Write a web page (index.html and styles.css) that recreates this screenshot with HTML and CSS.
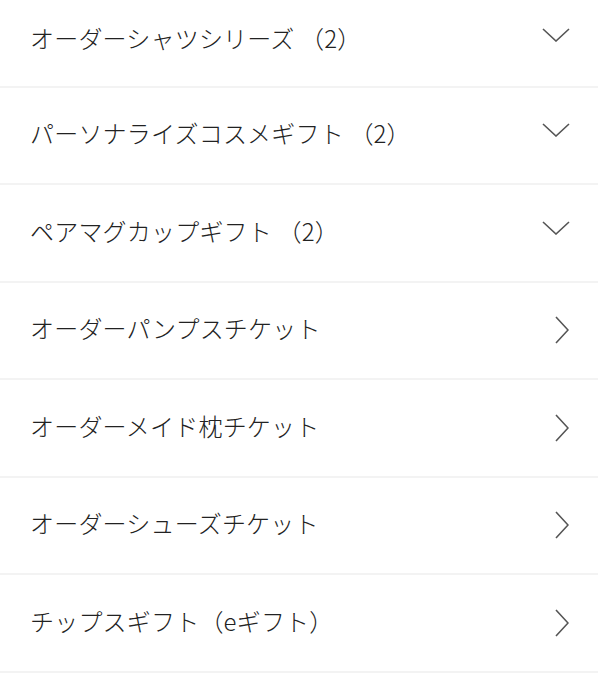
FILE: index.html
```html
<!DOCTYPE html>
<html lang="ja">
<head>
<meta charset="utf-8">
<link rel="stylesheet" href="styles.css">
</head>
<body>
<ul class="menu">
  <li class="row">
    <span class="label">オーダーシャツシリーズ （2）</span>
    <span class="icon"><svg class="down" viewBox="0 0 28 14"><path d="M1 1 L14 13 L27 1"/></svg></span>
  </li>
  <li class="row">
    <span class="label">パーソナライズコスメギフト （2）</span>
    <span class="icon"><svg class="down" viewBox="0 0 28 14"><path d="M1 1 L14 13 L27 1"/></svg></span>
  </li>
  <li class="row">
    <span class="label">ペアマグカップギフト （2）</span>
    <span class="icon"><svg class="down" viewBox="0 0 28 14"><path d="M1 1 L14 13 L27 1"/></svg></span>
  </li>
  <li class="row">
    <span class="label">オーダーパンプスチケット</span>
    <span class="icon"><svg class="right" viewBox="0 0 14 28"><path d="M1 1 L13 14 L1 27"/></svg></span>
  </li>
  <li class="row">
    <span class="label">オーダーメイド枕チケット</span>
    <span class="icon"><svg class="right" viewBox="0 0 14 28"><path d="M1 1 L13 14 L1 27"/></svg></span>
  </li>
  <li class="row">
    <span class="label">オーダーシューズチケット</span>
    <span class="icon"><svg class="right" viewBox="0 0 14 28"><path d="M1 1 L13 14 L1 27"/></svg></span>
  </li>
  <li class="row">
    <span class="label">チップスギフト（eギフト）</span>
    <span class="icon"><svg class="right" viewBox="0 0 14 28"><path d="M1 1 L13 14 L1 27"/></svg></span>
  </li>
</ul>
</body>
</html>
```
FILE: styles.css
```css
html, body {
  margin: 0;
  padding: 0;
  background: #ffffff;
}
body {
  font-family: "Noto Sans CJK JP", "Noto Sans", sans-serif;
  color: #222222;
  overflow: hidden;
}
.menu {
  list-style: none;
  margin: 0;
  padding: 0;
}
.row {
  display: flex;
  align-items: center;
  justify-content: space-between;
  height: 95.5px;
  padding: 0 28px 0 30px;
  border-bottom: 2px solid #f3f3f3;
}
.row:first-child {
  height: 79.5px;
  padding-bottom: 6px;
}
.label {
  font-size: 24px;
  font-weight: 300;
  letter-spacing: 0.2px;
  line-height: 1;
  margin-top: -4px;
}
.icon {
  width: 28px;
  display: flex;
  justify-content: flex-end;
}
.icon svg {
  display: block;
  fill: none;
  stroke: #555555;
  stroke-width: 1.6;
}
.down {
  width: 28px;
  height: 14px;
  margin-top: -10px;
}
.right {
  width: 14px;
  height: 28px;
  margin-right: 1px;
}
```
